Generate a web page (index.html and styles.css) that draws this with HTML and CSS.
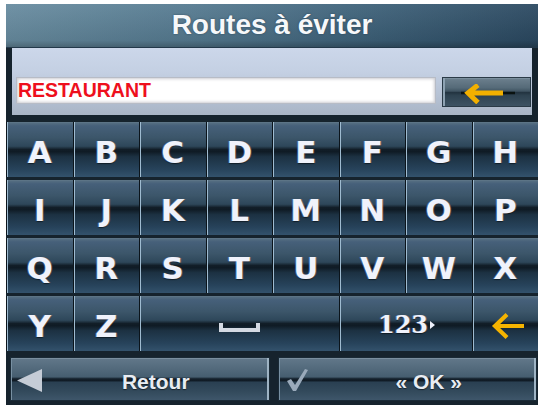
FILE: index.html
```html
<!DOCTYPE html>
<html lang="fr">
<head>
<meta charset="utf-8">
<title>Routes à éviter</title>
<link rel="stylesheet" href="styles.css">
</head>
<body>
<div class="screen">
  <div class="title">Routes à éviter</div>
  <div class="entry">
    <div class="field">RESTAURANT</div>
    <div class="back-btn">
      <svg class="arrow-big" width="56" height="20" viewBox="0 0 56 20">
        <line x1="2" y1="9" x2="56" y2="9" stroke="#0a1210" stroke-width="2.5"/>
        <path d="M44 9 H9 M19 1 L9 9 L19 18.5" fill="none" stroke="#f2b000" stroke-width="5" stroke-linecap="butt" stroke-linejoin="miter"/>
      </svg>
    </div>
  </div>
  <div class="keyboard">
    <div class="key">A</div><div class="key">B</div><div class="key">C</div><div class="key">D</div>
    <div class="key">E</div><div class="key">F</div><div class="key">G</div><div class="key">H</div>
    <div class="key">I</div><div class="key">J</div><div class="key">K</div><div class="key">L</div>
    <div class="key">M</div><div class="key">N</div><div class="key">O</div><div class="key">P</div>
    <div class="key">Q</div><div class="key">R</div><div class="key">S</div><div class="key">T</div>
    <div class="key">U</div><div class="key">V</div><div class="key">W</div><div class="key">X</div>
    <div class="key">Y</div><div class="key">Z</div>
    <div class="key span3"><span class="space-sym"></span></div>
    <div class="key span2 num">123<span class="tri"></span></div>
    <div class="key arrow-key">
      <svg width="34" height="28" viewBox="0 0 34 28">
        <path d="M33 14 H5 M16 2.5 L4 14 L16 25.5" fill="none" stroke="#f5b300" stroke-width="4.2" stroke-linejoin="miter"/>
      </svg>
    </div>
  </div>
  <div class="actions">
    <div class="btn">
      <span class="ico ico-back">
        <svg width="26" height="23" viewBox="0 0 26 23"><polygon points="0,11.5 25,0 25,23" fill="#c5ccd6"/></svg>
      </span>
      <span class="label">Retour</span>
    </div>
    <div class="btn">
      <span class="ico ico-ok">
        <svg width="21" height="22" viewBox="0 0 21 22"><polygon points="0,12 4,10 8,16 18,0 21,1 9,22 6,22" fill="#9aaabb"/></svg>
      </span>
      <span class="label label-ok">« OK »</span>
    </div>
  </div>
</div>
</body>
</html>
```
FILE: styles.css
```css
html, body {
  margin: 0;
  padding: 0;
  background: #ffffff;
}

.screen {
  margin: 4px 0 0 6px;
  width: 532px;
  height: 401px;
  background: #16232d;
  display: flex;
  flex-direction: column;
  overflow: hidden;
}

.title {
  height: 41px;
  padding-bottom: 2px;
  border-bottom: 1px solid #22384a;
  box-sizing: content-box;
  display: flex;
  align-items: center;
  justify-content: center;
  font-family: "Liberation Sans", Arial, sans-serif;
  font-weight: bold;
  font-size: 28px;
  color: #f6f8fa;
  text-shadow: 0 0 2px rgba(20, 40, 60, 0.6);
  background:
    linear-gradient(to bottom, rgba(255,255,255,0.06), rgba(0,0,0,0.08) 85%, rgba(0,0,0,0.25)),
    linear-gradient(90deg, #688ca0 0%, #557a90 35%, #3f637b 65%, #2b4961 100%);
}

.entry {
  margin: 0 6px 0 6px;
  height: 67px;
  box-sizing: border-box;
  padding: 29px 1px 0 4px;
  display: flex;
  align-items: flex-start;
  background: linear-gradient(to bottom, #ccd7ea 0%, #c4d0e3 35%, #b4c0d2 75%, #a9b5c6 100%);
}

.field {
  width: 420px;
  height: 27px;
  box-sizing: border-box;
  margin-right: 6px;
  padding-left: 1px;
  display: flex;
  align-items: center;
  background: #ffffff;
  border: 1px solid #b7bcc6;
  box-shadow: inset 0 0 3px 1px rgba(140, 140, 150, 0.45);
  font-family: "Liberation Sans", Arial, sans-serif;
  font-weight: bold;
  font-size: 19.5px;
  color: #ee0f1c;
}

.back-btn {
  width: 89px;
  height: 30px;
  box-sizing: border-box;
  display: flex;
  align-items: center;
  justify-content: center;
  padding-top: 3px;
  border: 1px solid #2a3a46;
  box-shadow: inset 2px 0 0 #8ea2b2, inset 0 1px 0 #7a8e9c;
  background: linear-gradient(to bottom, #6d808e 0%, #556a78 35%, #405462 47%, #223340 52%, #2e4250 62%, #3d5363 100%);
}

.keyboard {
  margin-top: 7px;
  display: grid;
  grid-template-columns: repeat(8, 1fr);
  grid-auto-rows: 55px;
  row-gap: 3px;
}

.key {
  display: flex;
  align-items: center;
  justify-content: center;
  box-sizing: border-box;
  padding-top: 5px;
  border-left: 1px solid #0b141b;
  box-shadow: inset 1px 0 0 #9fbbd0, inset 0 1px 0 #5c7486;
  background: linear-gradient(to bottom,
    #5a7284 0%, #46607a 7%, #3c566a 28%, #2e475a 44%,
    #121e28 50%, #0f1b25 54%, #1c3142 63%, #27435b 86%, #33526c 100%);
  font-family: "DejaVu Sans", Verdana, sans-serif;
  font-weight: bold;
  font-size: 31px;
  color: #f0f2fb;
  text-shadow: -1px 0 0 rgba(110, 150, 230, 0.45), 1px 0 0 rgba(230, 170, 130, 0.3), 0 1px 1px rgba(0, 0, 0, 0.5);
}

.span3 { grid-column: span 3; }
.span2 { grid-column: span 2; }

.space-sym {
  display: block;
  width: 33px;
  height: 5px;
  margin-top: 2px;
  margin-left: 1px;
  border: 4px solid #d4d9e2;
  border-top: none;
}

.num {
  font-family: "DejaVu Serif", "Liberation Serif", serif;
  font-size: 24px;
  padding-top: 1px;
  padding-left: 2px;
}

.tri {
  display: inline-block;
  width: 0;
  height: 0;
  margin-left: 2px;
  margin-top: 1px;
  border-top: 4px solid transparent;
  border-bottom: 4px solid transparent;
  border-left: 5px solid #eef0fa;
}

.arrow-key {
  padding-top: 4px;
  padding-left: 5px;
}

.actions {
  margin-top: 6px;
  height: 44px;
  padding: 0 1px 0 4px;
  display: flex;
  gap: 8px;
}

.btn {
  flex: 1;
  display: flex;
  align-items: center;
  box-sizing: border-box;
  border: 1px solid #1a2a36;
  box-shadow: inset 1px 0 0 #7890a2, inset -2px 0 0 #9fb4c4, inset 0 1px 0 #7a8e9e;
  background: linear-gradient(to bottom,
    #62788a 0%, #536a7c 25%, #465e70 45%, #1a2834 49%, #0d1720 53%,
    #2a4052 58%, #334a5c 80%, #3e566a 100%);
  font-family: "Liberation Sans", Arial, sans-serif;
  font-weight: bold;
  font-size: 21px;
  color: #e8ecf2;
  text-shadow: 0 1px 1px rgba(0, 0, 0, 0.5);
}

.ico {
  display: flex;
  align-items: center;
}

.ico-back {
  margin-left: 6px;
  padding-top: 3px;
}

.ico-ok {
  margin-left: 8px;
  padding-top: 1px;
}

.label {
  flex: 1;
  text-align: center;
  padding-top: 6px;
}

.label-ok {
  padding-left: 14px;
}
```
